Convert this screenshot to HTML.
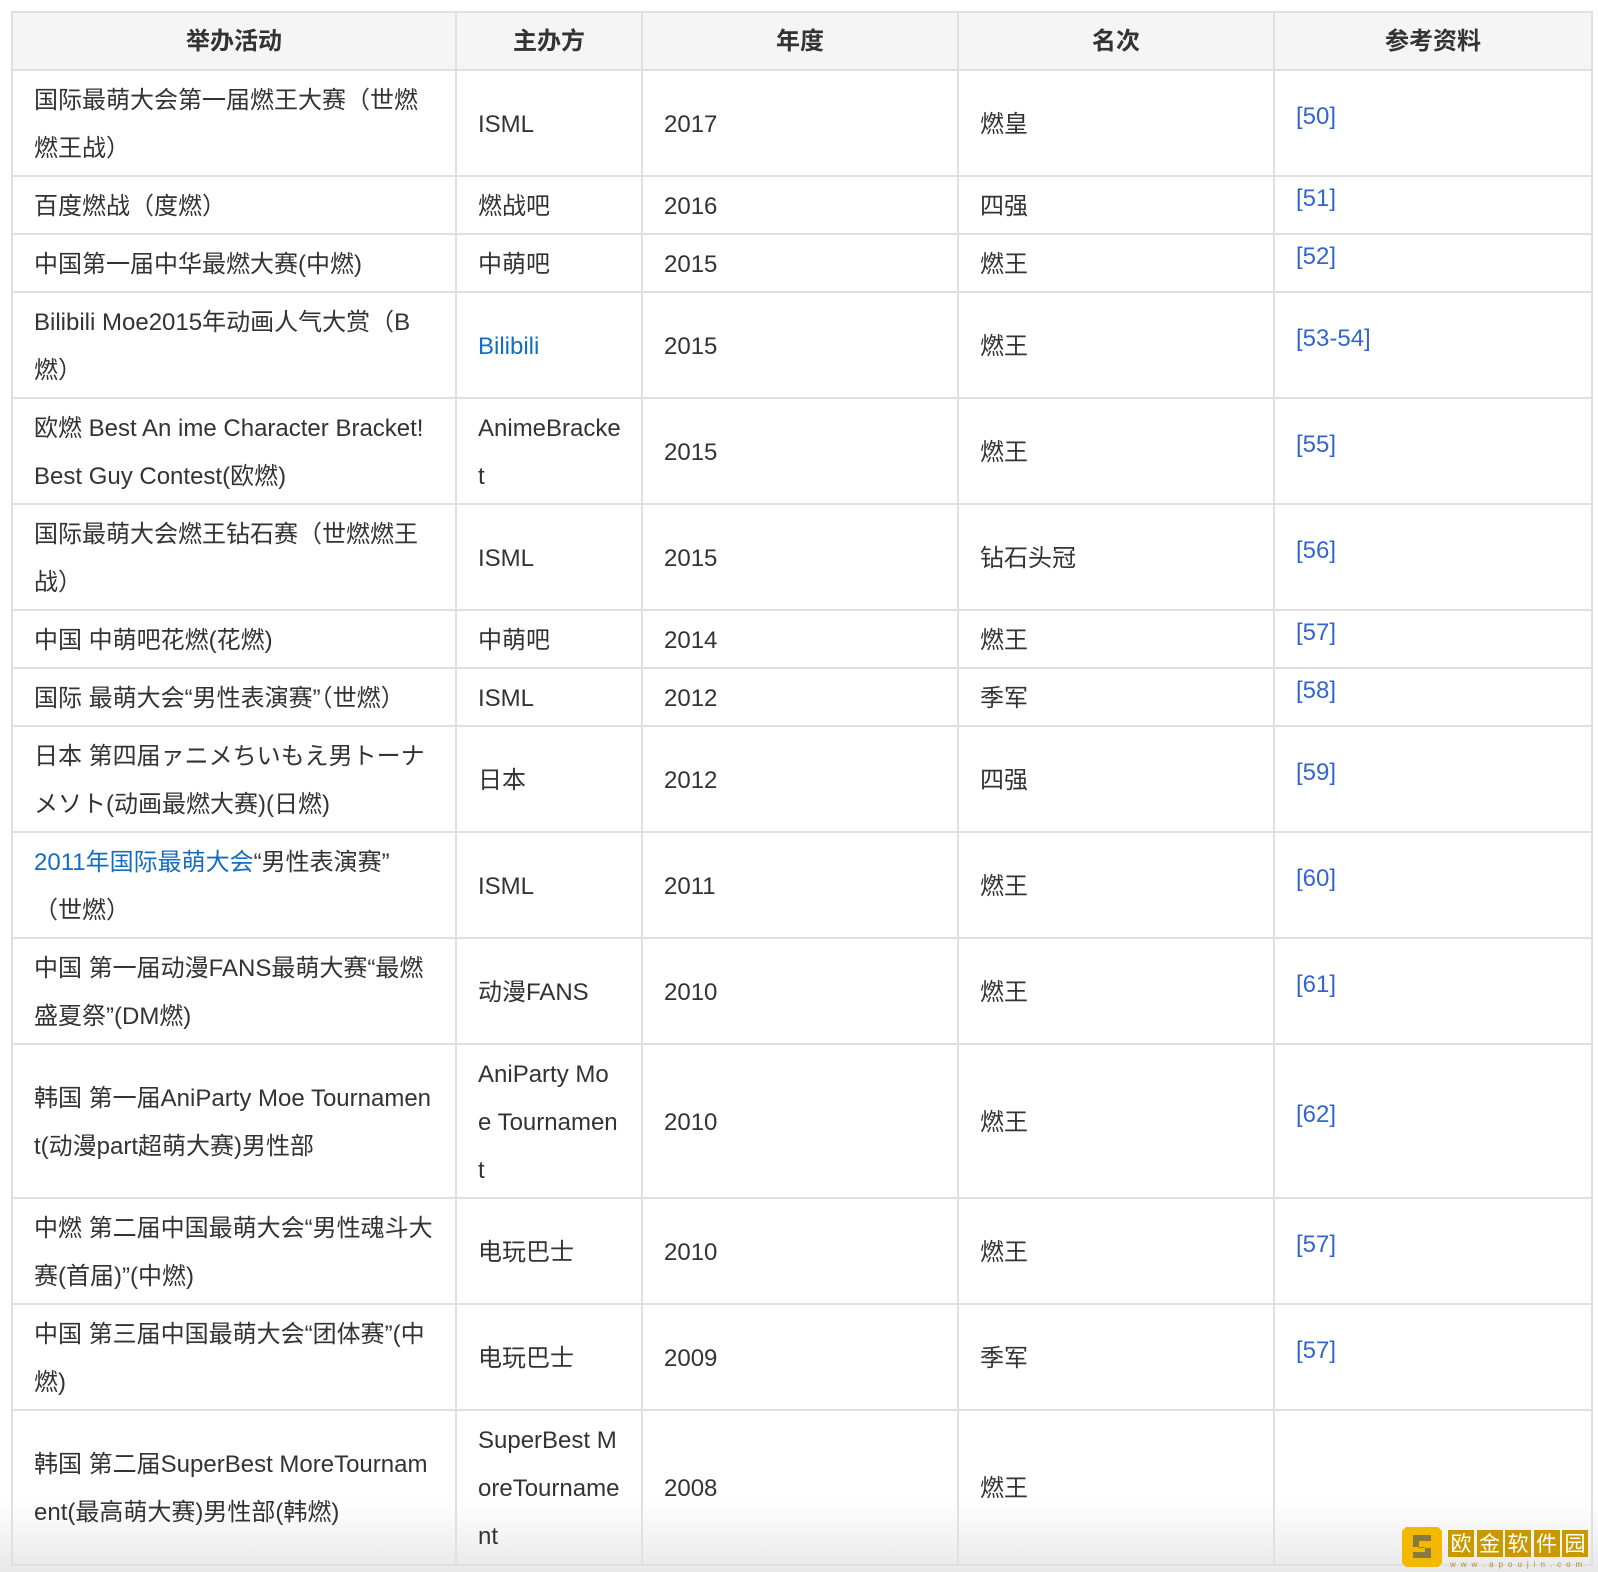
<!DOCTYPE html>
<html><head><meta charset="utf-8"><style>
body{margin:0;background:#fff;width:1598px;height:1572px;overflow:hidden;position:relative;font-family:"Liberation Sans","Noto Sans CJK SC",sans-serif;color:#333;font-size:24px;}
.c{position:absolute;box-sizing:border-box;border:2px solid #e0e0e0;margin:-1px 0 0 -1px;padding:3px 6px 0 21px;line-height:48px;display:flex;flex-direction:column;justify-content:center;white-space:nowrap;}
.h{background:#f5f5f5;font-weight:bold;align-items:center;padding:2px 0 0 0;}
a{color:#136ec2;text-decoration:none}
.r{color:#3366cc;position:relative;top:-8px}
.bot{position:absolute;left:0;top:1500px;width:1598px;height:72px;background:linear-gradient(rgba(255,255,255,0),#e8e8e8);}
.lg{background:#c99a00;color:#fff;font-size:21px;width:26px;height:27px;line-height:27px;text-align:center;font-family:'Noto Sans CJK SC',sans-serif}
</style></head><body>
<div class="bot"></div>
<div id="t"></div>
<svg style="position:absolute;left:1400px;top:1525px" width="44" height="44"><path d="M6 2h32l4 4v32l-4 4h-32l-4-4v-32z" fill="#f5b800"/><path d="M13 10h18v6h-12v7h12v10h-18v-6h12v-5h-12z" fill="#8a7a40"/></svg>
<div style="position:absolute;left:1448px;top:1530px;display:flex;gap:2.5px"><span class="lg">欧</span><span class="lg">金</span><span class="lg">软</span><span class="lg">件</span><span class="lg">园</span></div>
<div style="position:absolute;left:1450px;top:1560px;font-size:8px;letter-spacing:5px;color:#b08a30">www.apoujin.com</div>
<script>
var xs=[12,456,642,958,1274,1592];
var ys=[12,70,176,234,292,398,504,610,668,726,832,938,1044,1198,1304,1410,1565];
var rows=[
["举办活动","主办方","年度","名次","参考资料"],
["国际最萌大会第一届燃王大赛（世燃<br>燃王战）","ISML","2017","燃皇","[50]"],
["百度燃战（度燃）","燃战吧","2016","四强","[51]"],
["中国第一届中华最燃大赛(中燃)","中萌吧","2015","燃王","[52]"],
["Bilibili Moe2015年动画人气大赏（B<br>燃）","<a>Bilibili</a>","2015","燃王","[53-54]"],
["欧燃 Best An ime Character Bracket!<br>Best Guy Contest(欧燃)","AnimeBracke<br>t","2015","燃王","[55]"],
["国际最萌大会燃王钻石赛（世燃燃王<br>战）","ISML","2015","钻石头冠","[56]"],
["中国 中萌吧花燃(花燃)","中萌吧","2014","燃王","[57]"],
["国际 最萌大会“男性表演赛”（世燃）","ISML","2012","季军","[58]"],
["日本 第四届ァニメちいもえ男トーナ<br>メソト(动画最燃大赛)(日燃)","日本","2012","四强","[59]"],
["<a>2011年国际最萌大会</a>“男性表演赛”<br>（世燃）","ISML","2011","燃王","[60]"],
["中国 第一届动漫FANS最萌大赛“最燃<br>盛夏祭”(DM燃)","动漫FANS","2010","燃王","[61]"],
["韩国 第一届AniParty Moe Tournamen<br>t(动漫part超萌大赛)男性部","AniParty Mo<br>e Tournamen<br>t","2010","燃王","[62]"],
["中燃 第二届中国最萌大会“男性魂斗大<br>赛(首届)”(中燃)","电玩巴士","2010","燃王","[57]"],
["中国 第三届中国最萌大会“团体赛”(中<br>燃)","电玩巴士","2009","季军","[57]"],
["韩国 第二届SuperBest MoreTournam<br>ent(最高萌大赛)男性部(韩燃)","SuperBest M<br>oreTourname<br>nt","2008","燃王",""]];
var h="";
for(var i=0;i<rows.length;i++)for(var j=0;j<5;j++){
var txt=rows[i][j];
if(i>0&&j==4&&txt)txt='<span class="r">'+txt+'</span>';
h+='<div class="c'+(i==0?' h':'')+'" style="left:'+xs[j]+'px;top:'+ys[i]+'px;width:'+(xs[j+1]-xs[j]+2)+'px;height:'+(ys[i+1]-ys[i]+2)+'px"><div>'+txt+'</div></div>';
}
document.getElementById("t").innerHTML=h;
</script>
</body></html>
